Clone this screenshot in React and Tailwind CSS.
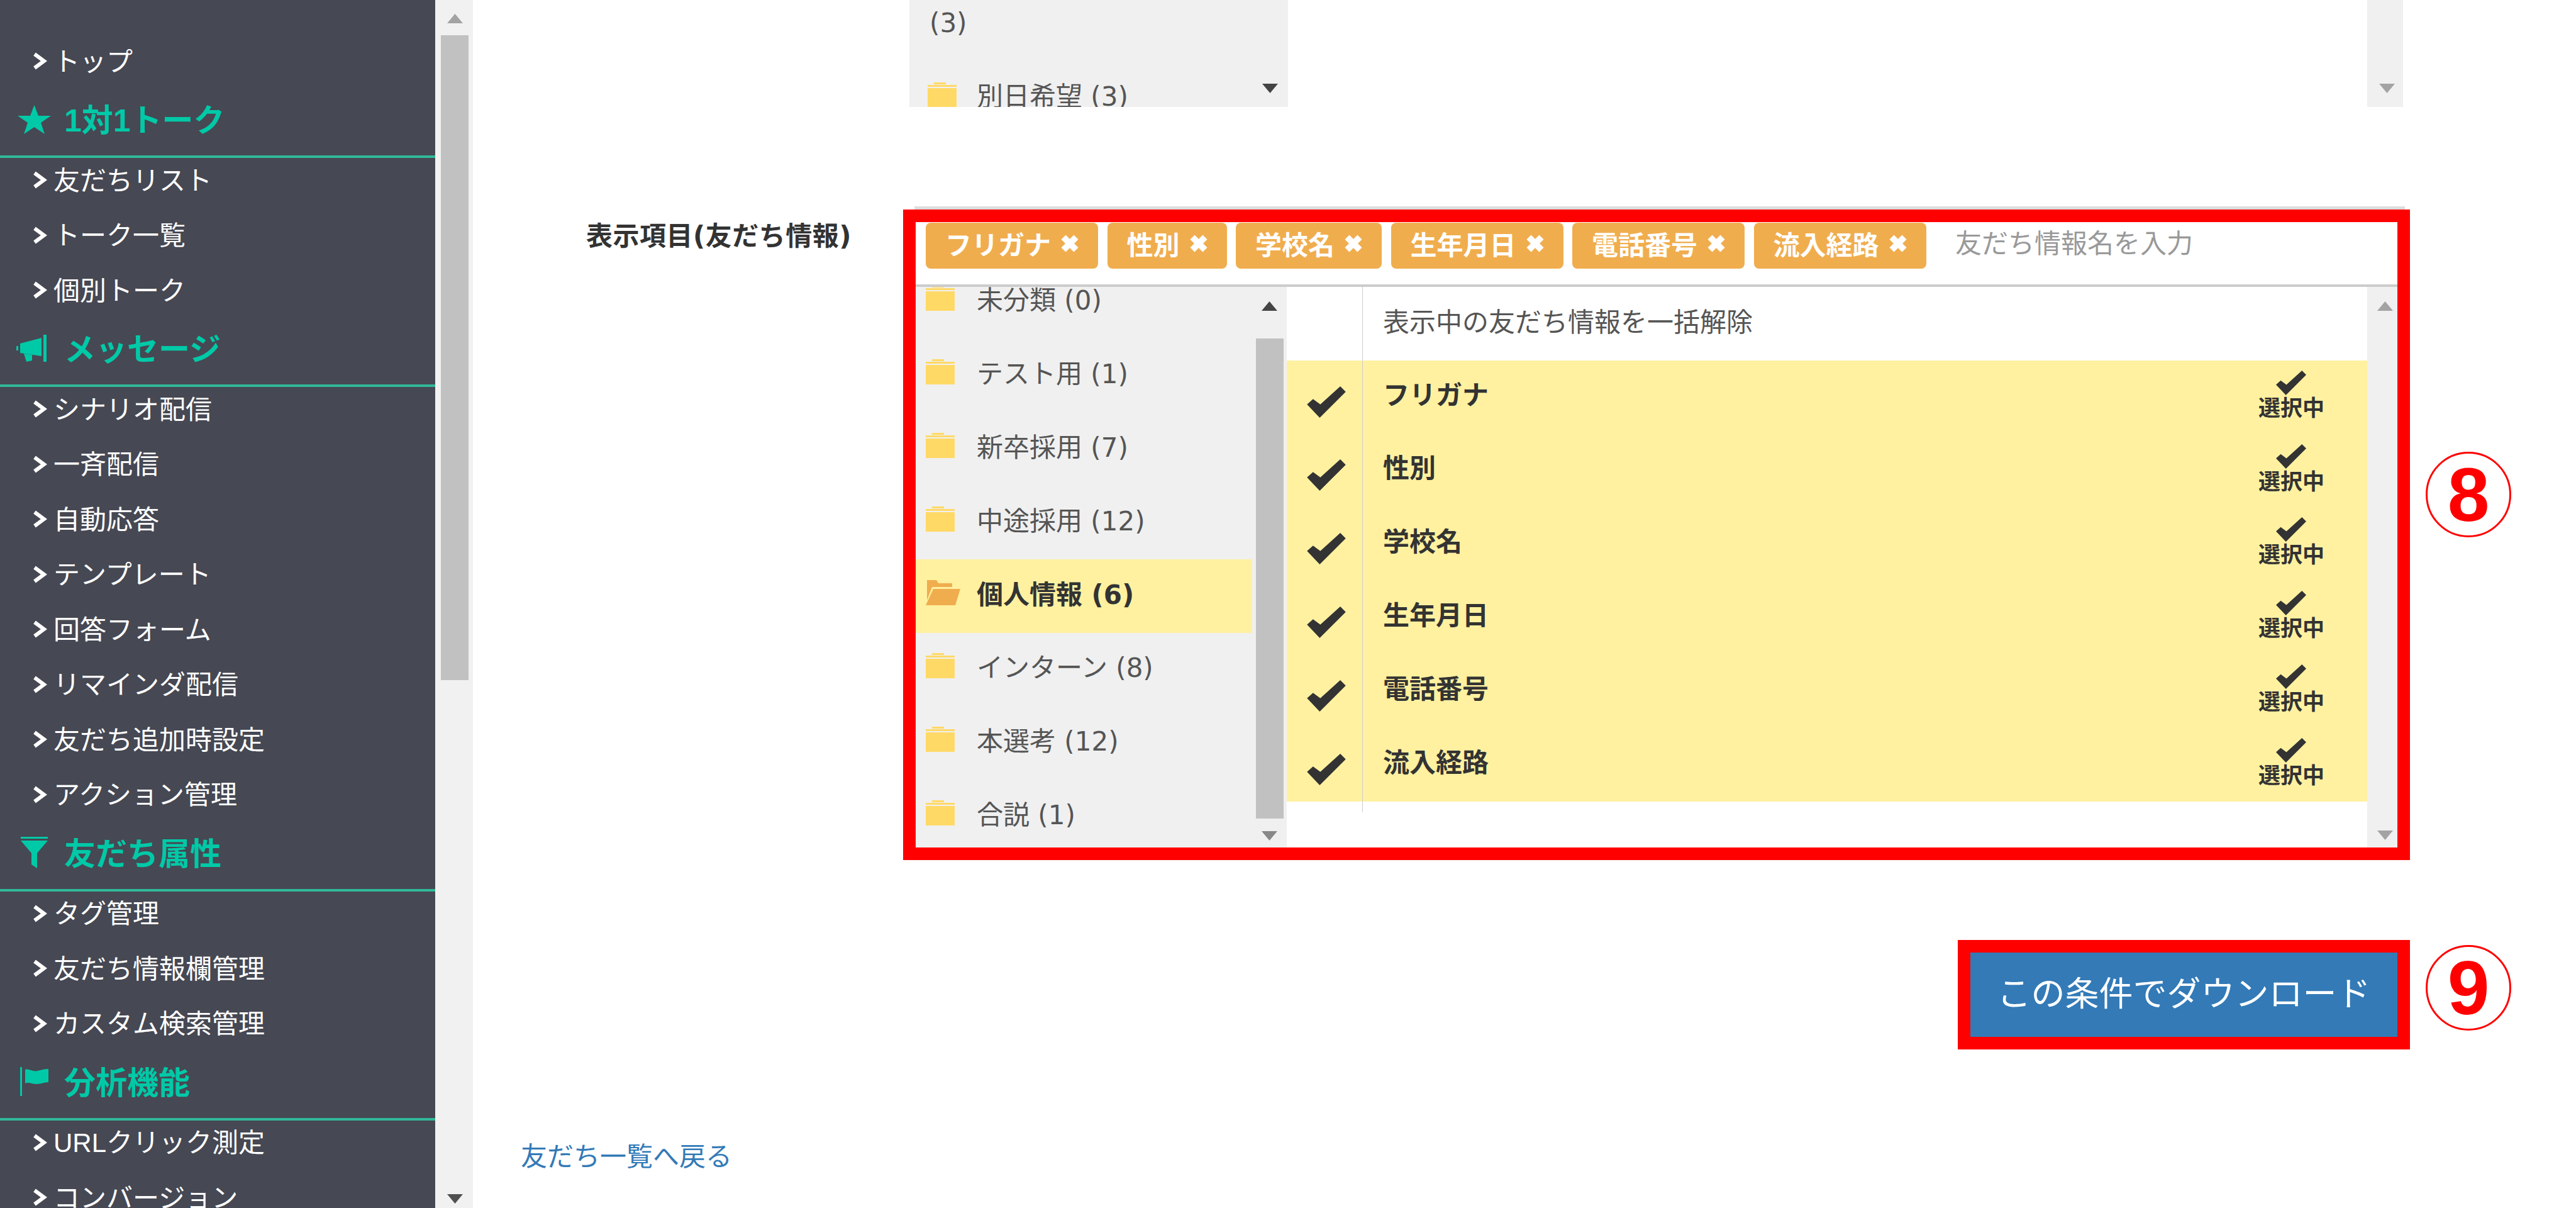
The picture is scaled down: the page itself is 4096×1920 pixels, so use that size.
import React from "react";

const sideMenu = [
  { title: null, items: ["トップ"] },
  { title: "1対1トーク", icon: "star", items: ["友だちリスト", "トーク一覧", "個別トーク"] },
  {
    title: "メッセージ",
    icon: "horn",
    items: ["シナリオ配信", "一斉配信", "自動応答", "テンプレート", "回答フォーム", "リマインダ配信", "友だち追加時設定", "アクション管理"],
  },
  { title: "友だち属性", icon: "filter", items: ["タグ管理", "友だち情報欄管理", "カスタム検索管理"] },
  { title: "分析機能", icon: "flag", items: ["URLクリック測定", "コンバージョン"] },
];

const tags = ["フリガナ", "性別", "学校名", "生年月日", "電話番号", "流入経路"];
const folders = ["未分類 (0)", "テスト用 (1)", "新卒採用 (7)", "中途採用 (12)", "個人情報 (6)", "インターン (8)", "本選考 (12)", "合説 (1)"];

function Chevron() {
  return (
    <svg width="23" height="28" viewBox="0 0 23 28" className="shrink-0">
      <polyline points="3,3 18,14 3,25" fill="none" stroke="#fff" strokeWidth="6" />
    </svg>
  );
}

function HeadIcon({ name }) {
  if (name === "star") {
    return (
      <svg width="53" height="46" viewBox="0 0 53 46" fill="#00c9a7">
        <polygon points="26.5,0 33,17 53,17 37,28 43,46 26.5,35 10,46 16,28 0,17 20,17" />
      </svg>
    );
  }
  if (name === "horn") {
    return (
      <svg width="56" height="43" viewBox="0 0 56 43" fill="#00c9a7">
        <path d="M0 18h3v7H0z" />
        <path d="M6 14 L40 5 V34 L6 29z" />
        <path d="M12 30 l13 2 v9 l-9 2z" />
        <path d="M43 0h5v43h-5z" />
      </svg>
    );
  }
  if (name === "filter") {
    return (
      <svg width="43" height="50" viewBox="0 0 43 50" fill="#00c9a7">
        <path d="M0 0h43v3H0z" />
        <path d="M0 6h43L26 26v24l-9-6V26z" />
      </svg>
    );
  }
  return (
    <svg width="45" height="46" viewBox="0 0 45 46" fill="#00c9a7">
      <path d="M0 0h3v46H0z" />
      <path d="M8 4 C14 2 20 8 28 6 S38 3 45 3 V24 C38 24 34 27 26 27 S14 23 8 26Z" />
    </svg>
  );
}

function Folder() {
  return (
    <svg width="46" height="40" viewBox="0 0 46 40" fill="#ffd966" className="shrink-0">
      <path d="M10 0h19v3H10z" />
      <path d="M0 4h46v3H0z" />
      <path d="M0 9h46v31H0z" />
    </svg>
  );
}

function OpenFolder() {
  return (
    <svg width="55" height="40" viewBox="0 0 55 40" fill="#f0ad4e" className="shrink-0">
      <path d="M2 0h15l3 5h22v6H10L2 32z" />
      <path d="M12 14h43l-8 26H0z" />
    </svg>
  );
}

function Check({ w, h }) {
  return (
    <svg width={w} height={h} viewBox="0 0 64 52" fill="#333" className="shrink-0">
      <polygon points="55,0 64,9 21,52 0,30 10,21 22,30" />
    </svg>
  );
}

function Arrow({ up, color, className }) {
  return (
    <svg width="25" height="15" viewBox="0 0 25 15" fill={color} className={className}>
      <polygon points={up ? "12.5,0 25,15 0,15" : "0,0 25,0 12.5,15"} />
    </svg>
  );
}

function Circled({ n, className }) {
  return (
    <div className={`flex h-[136px] w-[136px] shrink-0 items-center justify-center rounded-full border-[3px] border-[#f00] text-[120px] leading-none font-bold text-[#f00] ${className}`}>
      {n}
    </div>
  );
}

function Sidebar() {
  return (
    <aside className="h-full w-[692px] shrink-0 overflow-hidden bg-[#464853] pt-[62px] text-white">
      {sideMenu.map((sec, i) => (
        <div key={i}>
          {sec.title && (
            <div className="flex h-[119px] items-center border-b-[4px] border-[#31b99b] pl-[26px] text-[50px] font-bold text-[#00c9a7]">
              <span className="mr-[20px] flex w-[56px] justify-center">
                <HeadIcon name={sec.icon} />
              </span>
              <span className="pt-[6px]">{sec.title}</span>
            </div>
          )}
          <ul className="flex flex-col gap-[17.5px]">
            {sec.items.map((item) => (
              <li key={item} className="flex h-[70px] items-center gap-[10px] pl-[52px] text-[42px] leading-[64px]">
                <Chevron />
                <span className="pt-[3px]">{item}</span>
              </li>
            ))}
          </ul>
        </div>
      ))}
    </aside>
  );
}

function PageScrollbar() {
  return (
    <div className="flex h-full w-[60px] shrink-0 flex-col items-center bg-[#f1f1f1] pl-[2px]">
      <Arrow up color="#a3a3a3" className="mt-[22px]" />
      <div className="mt-[19px] h-[1025px] w-[44px] bg-[#c1c1c1]" />
      <Arrow color="#505050" className="mt-auto mb-[7px]" />
    </div>
  );
}

function TopPanels() {
  return (
    <div className="flex h-[170px] pl-[694px] font-['DejaVu_Sans','Noto_Sans_CJK_JP',sans-serif] text-[42px] text-[#555]">
      <div className="flex h-full w-[602px] justify-between overflow-hidden bg-[#f0f0f0]">
        <div>
          <div className="flex h-[76px] items-center pb-[3px] pl-[32px] leading-[70px]">(3)</div>
          <div className="mt-[28px] flex items-start pl-[29px]">
            <span className="mt-[27px]">
              <Folder />
            </span>
            <span className="mt-[5px] ml-[32px] leading-[90px]">別日希望 (3)</span>
          </div>
        </div>
        <Arrow color="#444" className="mt-[133px] mr-[16px]" />
      </div>
      <div className="ml-[1716px] flex h-full w-[57px] justify-center bg-[#f0f0f0] pl-[5px]">
        <Arrow color="#a3a3a3" className="mt-[133px]" />
      </div>
    </div>
  );
}

function TagRow() {
  return (
    <div className="flex h-[103px] items-start gap-[14.5px] border-b-[4px] border-[#ccc] pt-px pl-[16px]">
      {tags.map((t) => (
        <span key={t} className="flex h-[73px] items-center rounded-[8px] bg-[#f0ad4e] pr-[29px] pl-[31px] text-[42px] font-bold text-white">
          {t}
          <svg width="32" height="28" viewBox="0 0 32 28" className="mb-[8px] ml-[14px]">
            <path d="M6 4 L26 24 M26 4 L6 24" stroke="#fff" strokeWidth="10" />
          </svg>
        </span>
      ))}
      <span className="ml-[32px] text-[42px] leading-[68px] text-[#999]">友だち情報名を入力</span>
    </div>
  );
}

function FolderList() {
  return (
    <div className="flex h-full w-[590px] shrink-0 overflow-hidden bg-[#f0f0f0]">
      <ul className="mt-[-34px] w-[535px] shrink-0 font-['DejaVu_Sans','Noto_Sans_CJK_JP',sans-serif]">
        {folders.map((f) => {
          const active = f.startsWith("個人情報");
          return (
            <li
              key={f}
              className={`flex h-[116.8px] items-center pb-[5px] pl-[16px] text-[42px] ${active ? "bg-[#fff1a0] font-bold text-[#333]" : "text-[#555]"}`}
            >
              <span className="w-[81px] shrink-0 pb-[7px]">{active ? <OpenFolder /> : <Folder />}</span>
              {f}
            </li>
          );
        })}
      </ul>
      <div className="flex w-[55px] flex-col items-center">
        <Arrow up color="#444" className="mt-[23px]" />
        <div className="mt-[44px] h-[763px] w-[44px] bg-[#c1c1c1]" />
        <Arrow color="#888" className="mt-[20px]" />
      </div>
    </div>
  );
}

function SelectedList() {
  return (
    <div className="flex h-full flex-1 overflow-hidden bg-white">
      <div className="flex-1">
        <div className="flex h-[116.8px] text-[42px] text-[#555]">
          <div className="w-[121px] shrink-0 border-r border-[#ccc]" />
          <div className="flex items-center pb-[3px] pl-[32px]">表示中の友だち情報を一括解除</div>
        </div>
        {tags.map((t) => (
          <div key={t} className="flex h-[116.8px] bg-[#fff1a0] text-[#333]">
            <div className="flex w-[121px] shrink-0 items-center justify-center border-r border-[#ccc] pt-[15px] pl-[6px]">
              <Check w={62} h={50} />
            </div>
            <div className="flex flex-1 items-center pb-[6px] pl-[32px] text-[42px] font-bold">{t}</div>
            <div className="mr-[68px] flex flex-col items-center pt-[16px]">
              <Check w={48} h={39} />
              <span className="mt-[2px] text-[35px] leading-[37px] font-bold">選択中</span>
            </div>
          </div>
        ))}
        <div className="h-[17px] w-[121px] border-r border-[#ccc]" />
      </div>
      <div className="flex w-[48px] shrink-0 flex-col items-center bg-[#f0f0f0] pl-[9px]">
        <Arrow up color="#a3a3a3" className="mt-[23px]" />
        <Arrow color="#a3a3a3" className="mt-auto mb-[12px]" />
      </div>
    </div>
  );
}

export default function App() {
  return (
    <div className="flex h-[1920px] w-[4096px] overflow-hidden bg-white font-['Liberation_Sans','Noto_Sans_CJK_JP',sans-serif]">
      <Sidebar />
      <PageScrollbar />
      <main className="flex-1">
        <TopPanels />

        <div className="mt-[158px] ml-[702px] h-[5px] w-[2370px] bg-[#ddd]" />
        <div className="flex">
          <div className="w-[684px] shrink-0 pt-[14px] pl-[180px] font-['DejaVu_Sans','Noto_Sans_CJK_JP',sans-serif] text-[42px] leading-[58px] font-bold tracking-[0.5px] text-[#333]">表示項目(友だち情報)</div>
          <div className="flex h-[1034px] w-[2396px] shrink-0 flex-col border-[20.5px] border-[#f00] bg-white">
            <TagRow />
            <div className="flex min-h-0 flex-1">
              <FolderList />
              <SelectedList />
            </div>
          </div>
          <Circled n="8" className="mt-[385px] ml-[25px]" />
        </div>

        <div className="mt-[127px] ml-[2361px] flex">
          <div className="h-[173.5px] w-[719px] shrink-0 border-[20.5px] border-[#f00]">
            <button className="h-full w-full bg-[#337ab7] text-center text-[54px] text-white">この条件でダウンロード</button>
          </div>
          <Circled n="9" className="mt-[8px] ml-[25px]" />
        </div>

        <a className="mt-[141px] ml-[76px] block text-[42px] leading-[60px] text-[#337ab7]">友だち一覧へ戻る</a>
      </main>
    </div>
  );
}
